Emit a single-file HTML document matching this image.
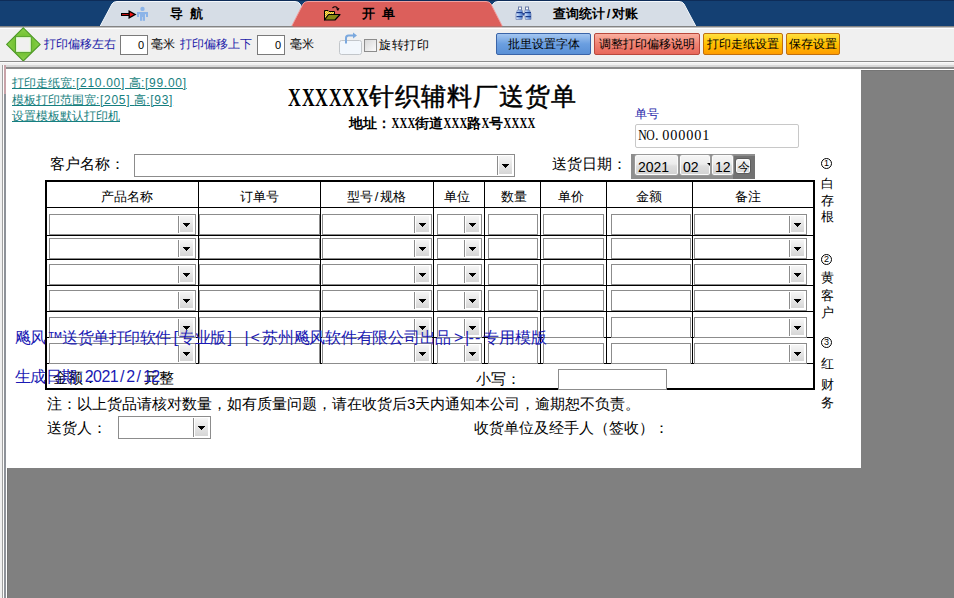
<!DOCTYPE html><html><head><meta charset="utf-8"><style>
*{margin:0;padding:0;box-sizing:border-box}
html,body{text-spacing-trim:space-all;width:954px;height:598px;overflow:hidden;background:#f0f0f0;font-family:"Liberation Sans",sans-serif;font-size:12px;color:#000}
.abs{position:absolute}
.t{position:absolute;white-space:nowrap;line-height:1}
.inp{position:absolute;background:#fff;border:1px solid #8c8c8c}
.cb{position:absolute;background:#fff;border:1px solid #8c8c8c}
.cb .sep{position:absolute;top:1px;bottom:1px;width:1px;background:#8c8c8c}
.cb .btn{position:absolute;background:linear-gradient(#f6f6f6,#d6d6d6)}
.cb .tri{position:absolute;width:0;height:0;border-left:4px solid transparent;border-right:4px solid transparent;border-top:4px solid #000}
.hl{position:absolute;height:1px;background:#000}
.vl{position:absolute;width:1px;background:#000}
.btn2{position:absolute;border-radius:2px;font-size:12px;line-height:20px;text-align:center;white-space:nowrap}
</style></head><body>
<div class="abs" style="left:0;top:0;width:954px;height:27px;background:#144073"></div>
<div class="abs" style="left:0;top:0;width:954px;height:1px;background:#0e2c58"></div>
<svg class="abs" style="left:0;top:0" width="954" height="28">
<path d="M100,26.5 L112,4 Q113.5,1.5 117,1.5 L295,1.5 Q298.5,1.5 300,4 L312,26.5 Z" fill="#d6dde6" stroke="#f4f8fc" stroke-width="1"/>
<path d="M481,26.5 L493,4 Q494.5,1.5 498,1.5 L679,1.5 Q682.5,1.5 684,4 L696,26.5 Z" fill="#d6dde6" stroke="#f4f8fc" stroke-width="1"/>
<path d="M291,27.5 L303,4 Q304.5,1.5 308,1.5 L486,1.5 Q489.5,1.5 491,4 L503,27.5 Z" fill="#dc5f5b" stroke="#f0a0a0" stroke-width="1"/>
</svg>
<div class="abs" style="left:0;top:26px;width:954px;height:1px;background:#848484"></div>
<div class="abs" style="left:0;top:27px;width:954px;height:1px;background:#c4c4c4"></div>
<div class="abs" style="left:293px;top:26px;width:209px;height:1px;background:#b46c68"></div>
<div class="abs" style="left:293px;top:27px;width:209px;height:1px;background:#dcc0c0"></div>
<div class="abs" style="left:0;top:28px;width:954px;height:1px;background:#fff"></div>
<svg class="abs" style="left:116px;top:3px" width="36" height="21">
<rect x="5" y="10" width="8.5" height="3" fill="#000"/>
<rect x="6" y="11" width="7.5" height="1" fill="#c41010"/>
<path d="M12.5,7 L20.5,11.5 L12.5,16 Z" fill="#000"/>
<path d="M13.8,9.3 L18,11.5 L13.8,13.7 Z" fill="#f01010"/>
<circle cx="26.5" cy="5.9" r="2.2" fill="#8cb4e8"/>
<rect x="21" y="9" width="11" height="2.2" fill="#8cb4e8"/>
<rect x="21" y="9" width="2" height="5" fill="#8cb4e8"/>
<rect x="30" y="9" width="2" height="5" fill="#8cb4e8"/>
<rect x="24" y="9" width="5" height="5" fill="#8cb4e8"/>
<rect x="24" y="13" width="2.2" height="4.8" fill="#8cb4e8"/>
<rect x="26.8" y="13" width="2.2" height="4.8" fill="#8cb4e8"/>
</svg>
<svg class="abs" style="left:318px;top:2px" width="28" height="22">
<defs><pattern id="chk" width="2" height="2" patternUnits="userSpaceOnUse"><rect width="2" height="2" fill="#f6e66a"/><rect width="1" height="1" fill="#d8a818"/><rect x="1" y="1" width="1" height="1" fill="#d8a818"/></pattern></defs>
<path d="M6.5,8.5 L10,8.5 L11,9.5 L16.5,9.5 L16.5,12.5 L6.5,18 Z" fill="url(#chk)" stroke="#000" stroke-width="1"/>
<path d="M6.5,18 L10.5,12.5 L22,12.5 L17,18 Z" fill="#868614" stroke="#000" stroke-width="1.2" stroke-linejoin="round"/>
<path d="M14.5,6 Q17,3.5 19.5,6" fill="none" stroke="#000" stroke-width="1.1"/>
<path d="M18,6.5 L21.5,6 L20,9 Z" fill="#000"/>
</svg>
<svg class="abs" style="left:510px;top:2px" width="28" height="22">
<defs><linearGradient id="bg1" x1="0" y1="0" x2="1" y2="0"><stop offset="0" stop-color="#e4f0ff"/><stop offset="0.6" stop-color="#7aa4e4"/><stop offset="1" stop-color="#4a74c0"/></linearGradient></defs>
<rect x="8.5" y="5" width="3" height="3" fill="#fff" stroke="#6a7ca8" stroke-width="1"/>
<rect x="15.5" y="5" width="3" height="3" fill="#fff" stroke="#6a7ca8" stroke-width="1"/>
<path d="M7.5,8 L12,8 L13,12 L12,17.5 L6,17.5 L6,12 Z" fill="url(#bg1)" stroke="#7a8cb8" stroke-width="0.8"/>
<path d="M15,8 L19.5,8 L21,12 L21,17.5 L15.5,17.5 L14.5,12 Z" fill="url(#bg1)" stroke="#7a8cb8" stroke-width="0.8"/>
<rect x="6.5" y="10" width="6" height="1.2" fill="#1a3a8a"/>
<rect x="15" y="10" width="6" height="1.2" fill="#1a3a8a"/>
<rect x="6.5" y="14" width="6" height="1.2" fill="#1a3a8a"/>
<rect x="15.5" y="14" width="5.5" height="1.2" fill="#1a3a8a"/>
<path d="M12,11 L15,11 L14,13.5 L13,13.5 Z" fill="#2a4a9a"/>
</svg>
<div class="t" style="left:170px;top:7px;font-size:13px;font-weight:bold">导</div>
<div class="t" style="left:190px;top:7px;font-size:13px;font-weight:bold">航</div>
<div class="t" style="left:362px;top:7px;font-size:13px;font-weight:bold">开</div>
<div class="t" style="left:382px;top:7px;font-size:13px;font-weight:bold">单</div>
<div class="t" style="left:553px;top:7px;font-size:13px;font-weight:bold">查询统计<span style="display:inline-block;width:7px;text-align:center">/</span>对账</div>
<svg class="abs" style="left:6px;top:27px" width="36" height="36">
<defs><radialGradient id="dg" cx="0.5" cy="0.5" r="0.6"><stop offset="0.3" stop-color="#6cbc2c"/><stop offset="1" stop-color="#92d852"/></radialGradient></defs>
<path d="M17.3,0.8 L34.1,17.4 L17.3,34 L0.7,17.4 Z" fill="url(#dg)" stroke="#4e9a26" stroke-width="1.1"/>
<rect x="9.7" y="9.8" width="15.4" height="15.4" fill="#f0f0f0" stroke="#4e9a26" stroke-width="1.1"/>
<rect x="10.7" y="10.8" width="13.4" height="13.4" fill="none" stroke="#e4fcd4" stroke-width="1"/>
</svg>
<div class="t" style="left:44px;top:38px;color:#1a1aa8">打印偏移左右</div>
<div class="inp" style="left:120px;top:35px;width:28px;height:20px;border-color:#7a7a7a"><span class="t" style="right:3px;top:4px;font-size:11px">0</span></div>
<div class="t" style="left:151px;top:38px">毫米</div>
<div class="t" style="left:180px;top:38px;color:#1a1aa8">打印偏移上下</div>
<div class="inp" style="left:257px;top:35px;width:28px;height:20px;border-color:#7a7a7a"><span class="t" style="right:3px;top:4px;font-size:11px">0</span></div>
<div class="t" style="left:290px;top:38px">毫米</div>
<svg class="abs" style="left:338px;top:31px" width="26" height="25">
<rect x="1.5" y="9.5" width="22" height="14" rx="2" fill="#f2f7fc" stroke="#c2c6ca" stroke-width="1"/>
<path d="M8,12.5 L8,7 Q8,4.5 10.5,4.5 L16,4.5" fill="none" stroke="#7aa8de" stroke-width="2"/>
<path d="M15,1.5 L19,4.5 L15,7.5 Z" fill="#7aa8de"/>
</svg>
<div class="abs" style="left:364px;top:39px;width:13px;height:13px;border:1px solid #8c8c8c;background:linear-gradient(135deg,#d8d8d8,#fafafa)"></div>
<div class="t" style="left:379px;top:39px;font-size:12px;letter-spacing:0.6px">旋转打印</div>
<div class="btn2" style="left:496px;top:33px;width:95px;height:22px;background:linear-gradient(#a4c6f0,#6a9ee0 50%,#5a90d6);border:1px solid #3a64a8">批里设置字体</div>
<div class="btn2" style="left:594px;top:33px;width:106px;height:22px;background:linear-gradient(#fab0a0,#f08272 50%,#e8675a);border:1px solid #b8483c">调整打印偏移说明</div>
<div class="btn2" style="left:703px;top:33px;width:80px;height:22px;background:linear-gradient(#ffe040,#ffc000 50%,#ff9c00);border:1px solid #c07010">打印走纸设置</div>
<div class="btn2" style="left:786px;top:33px;width:54px;height:22px;background:linear-gradient(#ffe040,#ffc000 50%,#ff9c00);border:1px solid #c07010">保存设置</div>
<div class="abs" style="left:0;top:61px;width:954px;height:1px;background:#8c8c8c"></div>
<div class="abs" style="left:0;top:62px;width:954px;height:1px;background:#fafafa"></div>
<div class="abs" style="left:4px;top:65px;width:950px;height:2px;background:#d8d8d8"></div>
<div class="abs" style="left:4px;top:67px;width:950px;height:2px;background:#8c8c8c"></div>
<div class="abs" style="left:2px;top:65px;width:1px;height:533px;background:#a0a0a0"></div>
<div class="abs" style="left:3px;top:65px;width:1px;height:533px;background:#fdfdfd"></div>
<div class="abs" style="left:4px;top:65px;width:2px;height:533px;background:#8e9299"></div>
<div class="abs" style="left:4px;top:65px;width:2px;height:29px;background:#c9a4aa"></div>
<div class="abs" style="left:6px;top:69px;width:1px;height:529px;background:#fff"></div>
<div class="abs" style="left:6px;top:69px;width:948px;height:1px;background:#fff"></div>
<div class="abs" style="left:7px;top:70px;width:947px;height:528px;background:#808080;border-top:1px solid #757575;border-left:1px solid #757575"></div>
<div class="abs" style="left:7px;top:69px;width:854px;height:399px;background:#fff"></div>
<div class="t" style="left:12px;top:77px;color:#177f80;text-decoration:underline">打印走纸宽<span style="letter-spacing:0.7px">:[210.00] </span>高<span style="letter-spacing:0.7px">:[99.00]</span></div>
<div class="t" style="left:12px;top:94px;color:#177f80;text-decoration:underline">模板打印范围宽<span style="letter-spacing:0.7px">:[205] </span>高<span style="letter-spacing:0.7px">:[93]</span></div>
<div class="t" style="left:12px;top:110px;color:#177f80;text-decoration:underline">设置模板默认打印机</div>
<div class="t" style="left:288px;top:85px;font-size:26px;font-weight:bold;font-family:'Liberation Serif',serif"><span style="display:inline-block;width:13.5px"><span style="display:inline-block;transform:scaleX(.68);transform-origin:0 0">X</span></span><span style="display:inline-block;width:13.5px"><span style="display:inline-block;transform:scaleX(.68);transform-origin:0 0">X</span></span><span style="display:inline-block;width:13.5px"><span style="display:inline-block;transform:scaleX(.68);transform-origin:0 0">X</span></span><span style="display:inline-block;width:13.5px"><span style="display:inline-block;transform:scaleX(.68);transform-origin:0 0">X</span></span><span style="display:inline-block;width:13.5px"><span style="display:inline-block;transform:scaleX(.68);transform-origin:0 0">X</span></span><span style="display:inline-block;width:13.5px"><span style="display:inline-block;transform:scaleX(.68);transform-origin:0 0">X</span></span></div>
<div class="t" style="left:369px;top:84px;font-size:25px;letter-spacing:1px;-webkit-text-stroke:0.5px #000">针织辅料厂送货单</div>
<div class="t" style="left:349px;top:116px;font-size:14px;font-weight:bold">地址：<span style="display:inline-block;width:8px;text-align:center;font-family:\'Liberation Serif\',serif;font-size:15px;position:relative;left:-1px"><span style="display:inline-block;transform:scaleX(0.72)">X</span></span><span style="display:inline-block;width:8px;text-align:center;font-family:\'Liberation Serif\',serif;font-size:15px;position:relative;left:-1px"><span style="display:inline-block;transform:scaleX(0.72)">X</span></span><span style="display:inline-block;width:8px;text-align:center;font-family:\'Liberation Serif\',serif;font-size:15px;position:relative;left:-1px"><span style="display:inline-block;transform:scaleX(0.72)">X</span></span>街道<span style="display:inline-block;width:8px;text-align:center;font-family:\'Liberation Serif\',serif;font-size:15px;position:relative;left:-1px"><span style="display:inline-block;transform:scaleX(0.72)">X</span></span><span style="display:inline-block;width:8px;text-align:center;font-family:\'Liberation Serif\',serif;font-size:15px;position:relative;left:-1px"><span style="display:inline-block;transform:scaleX(0.72)">X</span></span><span style="display:inline-block;width:8px;text-align:center;font-family:\'Liberation Serif\',serif;font-size:15px;position:relative;left:-1px"><span style="display:inline-block;transform:scaleX(0.72)">X</span></span>路<span style="display:inline-block;width:8px;text-align:center;font-family:\'Liberation Serif\',serif;font-size:15px;position:relative;left:-1px"><span style="display:inline-block;transform:scaleX(0.72)">X</span></span>号<span style="display:inline-block;width:8px;text-align:center;font-family:\'Liberation Serif\',serif;font-size:15px;position:relative;left:-1px"><span style="display:inline-block;transform:scaleX(0.72)">X</span></span><span style="display:inline-block;width:8px;text-align:center;font-family:\'Liberation Serif\',serif;font-size:15px;position:relative;left:-1px"><span style="display:inline-block;transform:scaleX(0.72)">X</span></span><span style="display:inline-block;width:8px;text-align:center;font-family:\'Liberation Serif\',serif;font-size:15px;position:relative;left:-1px"><span style="display:inline-block;transform:scaleX(0.72)">X</span></span><span style="display:inline-block;width:8px;text-align:center;font-family:\'Liberation Serif\',serif;font-size:15px;position:relative;left:-1px"><span style="display:inline-block;transform:scaleX(0.72)">X</span></span></div>
<div class="t" style="left:635px;top:108px;color:#1a1aa8">单号</div>
<div class="abs" style="left:635px;top:124px;width:164px;height:24px;border:1px solid #c8c8c8;border-radius:2px;background:#fff"></div>
<div class="t" style="left:637px;top:128px;font-size:15px;font-family:'Liberation Serif',serif"><span style="display:inline-block;width:8.1px;text-align:center;"><span style="display:inline-block;transform:scaleX(0.78)">N</span></span><span style="display:inline-block;width:8.1px;text-align:center;"><span style="display:inline-block;transform:scaleX(0.78)">O</span></span><span style="display:inline-block;width:8.1px;text-align:center;"><span style="display:inline-block;transform:scaleX(0.95)">.</span></span><span style="display:inline-block;width:8.1px;text-align:center;"><span style="display:inline-block;transform:scaleX(0.95)">0</span></span><span style="display:inline-block;width:8.1px;text-align:center;"><span style="display:inline-block;transform:scaleX(0.95)">0</span></span><span style="display:inline-block;width:8.1px;text-align:center;"><span style="display:inline-block;transform:scaleX(0.95)">0</span></span><span style="display:inline-block;width:8.1px;text-align:center;"><span style="display:inline-block;transform:scaleX(0.95)">0</span></span><span style="display:inline-block;width:8.1px;text-align:center;"><span style="display:inline-block;transform:scaleX(0.95)">0</span></span><span style="display:inline-block;width:8.1px;text-align:center;"><span style="display:inline-block;transform:scaleX(0.95)">1</span></span></div>
<div class="t" style="left:50px;top:156px;font-size:15px">客户名称：</div>
<div class="t" style="left:552px;top:156px;font-size:15px">送货日期：</div>
<div class="cb" style="left:134px;top:154px;width:381px;height:23px"><div class="sep" style="left:362px"></div><div class="btn" style="left:364px;top:1px;width:13px;height:18px"></div><svg width="7" height="4" style="position:absolute;left:367px;top:9px" shape-rendering="crispEdges"><rect x="0" y="0" width="7" height="1"/><rect x="1" y="1" width="5" height="1"/><rect x="2" y="2" width="3" height="1"/><rect x="3" y="3" width="1" height="1"/></svg></div>
<div class="abs" style="left:631px;top:154px;width:124px;height:25px;background:#8e8e8e"></div>
<div class="abs" style="left:733px;top:156px;width:22px;height:23px;background:#727272"></div>
<div class="abs" style="left:634px;top:154px;width:45px;height:22px;border-radius:3px;border:1px solid #9a9a9a;box-shadow:inset 0 0 0 1px #fbfbfb;background:linear-gradient(#f6f6f6,#ececec 45%,#dedede 55%,#d2d2d2)"><span class="t" style="left:3px;top:5px;font-size:14px">2021</span></div>
<div class="abs" style="left:679px;top:154px;width:32px;height:22px;border-radius:3px;border:1px solid #9a9a9a;box-shadow:inset 0 0 0 1px #fbfbfb;background:linear-gradient(#f6f6f6,#ececec 45%,#dedede 55%,#d2d2d2)"><span class="t" style="left:3px;top:5px;font-size:14px">02</span></div>
<div class="abs" style="left:707px;top:163px;width:0;height:0;border-top:3px solid #000;border-left:3px solid transparent"></div>
<div class="abs" style="left:711px;top:154px;width:23px;height:22px;border-radius:3px;border:1px solid #9a9a9a;box-shadow:inset 0 0 0 1px #fbfbfb;background:linear-gradient(#f6f6f6,#ececec 45%,#dedede 55%,#d2d2d2)"><span class="t" style="left:3px;top:5px;font-size:14px">12</span></div>
<div class="abs" style="left:735px;top:158px;width:16px;height:16px;border-radius:3px;border:1px solid #5e5e5e;box-shadow:inset 0 0 0 1px #fafafa;background:linear-gradient(#f6f6f6,#e8e8e8 50%,#d6d6d6)"><span class="t" style="left:1.5px;top:1.5px;font-size:12px">今</span></div>
<div class="abs" style="left:45px;top:180px;width:770px;height:2px;background:#000"></div>
<div class="abs" style="left:45px;top:388px;width:770px;height:2px;background:#000"></div>
<div class="abs" style="left:45px;top:180px;width:2px;height:210px;background:#000"></div>
<div class="abs" style="left:813px;top:180px;width:2px;height:210px;background:#000"></div>
<div class="hl" style="left:45px;top:207px;width:770px"></div>
<div class="hl" style="left:45px;top:235px;width:770px"></div>
<div class="hl" style="left:45px;top:259px;width:770px"></div>
<div class="hl" style="left:45px;top:285px;width:770px"></div>
<div class="hl" style="left:45px;top:311px;width:770px"></div>
<div class="hl" style="left:45px;top:337px;width:770px"></div>
<div class="hl" style="left:45px;top:363px;width:770px"></div>
<div class="vl" style="left:198px;top:180px;height:184px"></div>
<div class="vl" style="left:320px;top:180px;height:184px"></div>
<div class="vl" style="left:433px;top:180px;height:184px"></div>
<div class="vl" style="left:484px;top:180px;height:184px"></div>
<div class="vl" style="left:540px;top:180px;height:184px"></div>
<div class="vl" style="left:606px;top:180px;height:184px"></div>
<div class="vl" style="left:692px;top:180px;height:184px"></div>
<div class="t" style="left:50px;width:153px;top:190px;text-align:center;font-size:13px">产品名称</div>
<div class="t" style="left:198px;width:122px;top:190px;text-align:center;font-size:13px">订单号</div>
<div class="t" style="left:320px;width:113px;top:190px;text-align:center;font-size:13px">型号<span style="display:inline-block;width:6.5px;text-align:center;">/</span>规格</div>
<div class="t" style="left:431px;width:51px;top:190px;text-align:center;font-size:13px">单位</div>
<div class="t" style="left:485.5px;width:56px;top:190px;text-align:center;font-size:13px">数量</div>
<div class="t" style="left:538px;width:66px;top:190px;text-align:center;font-size:13px">单价</div>
<div class="t" style="left:606px;width:86px;top:190px;text-align:center;font-size:13px">金额</div>
<div class="t" style="left:687.5px;width:121px;top:190px;text-align:center;font-size:13px">备注</div>
<div class="cb" style="left:49px;top:214px;width:147px;height:21px"><div class="sep" style="left:128px"></div><div class="btn" style="left:130px;top:1px;width:13px;height:16px"></div><svg width="7" height="4" style="position:absolute;left:133px;top:8px" shape-rendering="crispEdges"><rect x="0" y="0" width="7" height="1"/><rect x="1" y="1" width="5" height="1"/><rect x="2" y="2" width="3" height="1"/><rect x="3" y="3" width="1" height="1"/></svg></div>
<div class="inp" style="left:199px;top:214px;width:121px;height:21px"></div>
<div class="cb" style="left:322px;top:214px;width:110px;height:21px"><div class="sep" style="left:91px"></div><div class="btn" style="left:93px;top:1px;width:13px;height:16px"></div><svg width="7" height="4" style="position:absolute;left:96px;top:8px" shape-rendering="crispEdges"><rect x="0" y="0" width="7" height="1"/><rect x="1" y="1" width="5" height="1"/><rect x="2" y="2" width="3" height="1"/><rect x="3" y="3" width="1" height="1"/></svg></div>
<div class="cb" style="left:437px;top:214px;width:45px;height:21px"><div class="sep" style="left:26px"></div><div class="btn" style="left:28px;top:1px;width:13px;height:16px"></div><svg width="7" height="4" style="position:absolute;left:31px;top:8px" shape-rendering="crispEdges"><rect x="0" y="0" width="7" height="1"/><rect x="1" y="1" width="5" height="1"/><rect x="2" y="2" width="3" height="1"/><rect x="3" y="3" width="1" height="1"/></svg></div>
<div class="inp" style="left:488px;top:214px;width:50px;height:21px"></div>
<div class="inp" style="left:543px;top:214px;width:61px;height:21px"></div>
<div class="inp" style="left:611px;top:214px;width:80px;height:21px"></div>
<div class="cb" style="left:694px;top:214px;width:113px;height:21px"><div class="sep" style="left:94px"></div><div class="btn" style="left:96px;top:1px;width:13px;height:16px"></div><svg width="7" height="4" style="position:absolute;left:99px;top:8px" shape-rendering="crispEdges"><rect x="0" y="0" width="7" height="1"/><rect x="1" y="1" width="5" height="1"/><rect x="2" y="2" width="3" height="1"/><rect x="3" y="3" width="1" height="1"/></svg></div>
<div class="cb" style="left:49px;top:238px;width:147px;height:21px"><div class="sep" style="left:128px"></div><div class="btn" style="left:130px;top:1px;width:13px;height:16px"></div><svg width="7" height="4" style="position:absolute;left:133px;top:8px" shape-rendering="crispEdges"><rect x="0" y="0" width="7" height="1"/><rect x="1" y="1" width="5" height="1"/><rect x="2" y="2" width="3" height="1"/><rect x="3" y="3" width="1" height="1"/></svg></div>
<div class="inp" style="left:199px;top:238px;width:121px;height:21px"></div>
<div class="cb" style="left:322px;top:238px;width:110px;height:21px"><div class="sep" style="left:91px"></div><div class="btn" style="left:93px;top:1px;width:13px;height:16px"></div><svg width="7" height="4" style="position:absolute;left:96px;top:8px" shape-rendering="crispEdges"><rect x="0" y="0" width="7" height="1"/><rect x="1" y="1" width="5" height="1"/><rect x="2" y="2" width="3" height="1"/><rect x="3" y="3" width="1" height="1"/></svg></div>
<div class="cb" style="left:437px;top:238px;width:45px;height:21px"><div class="sep" style="left:26px"></div><div class="btn" style="left:28px;top:1px;width:13px;height:16px"></div><svg width="7" height="4" style="position:absolute;left:31px;top:8px" shape-rendering="crispEdges"><rect x="0" y="0" width="7" height="1"/><rect x="1" y="1" width="5" height="1"/><rect x="2" y="2" width="3" height="1"/><rect x="3" y="3" width="1" height="1"/></svg></div>
<div class="inp" style="left:488px;top:238px;width:50px;height:21px"></div>
<div class="inp" style="left:543px;top:238px;width:61px;height:21px"></div>
<div class="inp" style="left:611px;top:238px;width:80px;height:21px"></div>
<div class="cb" style="left:694px;top:238px;width:113px;height:21px"><div class="sep" style="left:94px"></div><div class="btn" style="left:96px;top:1px;width:13px;height:16px"></div><svg width="7" height="4" style="position:absolute;left:99px;top:8px" shape-rendering="crispEdges"><rect x="0" y="0" width="7" height="1"/><rect x="1" y="1" width="5" height="1"/><rect x="2" y="2" width="3" height="1"/><rect x="3" y="3" width="1" height="1"/></svg></div>
<div class="cb" style="left:49px;top:264px;width:147px;height:21px"><div class="sep" style="left:128px"></div><div class="btn" style="left:130px;top:1px;width:13px;height:16px"></div><svg width="7" height="4" style="position:absolute;left:133px;top:8px" shape-rendering="crispEdges"><rect x="0" y="0" width="7" height="1"/><rect x="1" y="1" width="5" height="1"/><rect x="2" y="2" width="3" height="1"/><rect x="3" y="3" width="1" height="1"/></svg></div>
<div class="inp" style="left:199px;top:264px;width:121px;height:21px"></div>
<div class="cb" style="left:322px;top:264px;width:110px;height:21px"><div class="sep" style="left:91px"></div><div class="btn" style="left:93px;top:1px;width:13px;height:16px"></div><svg width="7" height="4" style="position:absolute;left:96px;top:8px" shape-rendering="crispEdges"><rect x="0" y="0" width="7" height="1"/><rect x="1" y="1" width="5" height="1"/><rect x="2" y="2" width="3" height="1"/><rect x="3" y="3" width="1" height="1"/></svg></div>
<div class="cb" style="left:437px;top:264px;width:45px;height:21px"><div class="sep" style="left:26px"></div><div class="btn" style="left:28px;top:1px;width:13px;height:16px"></div><svg width="7" height="4" style="position:absolute;left:31px;top:8px" shape-rendering="crispEdges"><rect x="0" y="0" width="7" height="1"/><rect x="1" y="1" width="5" height="1"/><rect x="2" y="2" width="3" height="1"/><rect x="3" y="3" width="1" height="1"/></svg></div>
<div class="inp" style="left:488px;top:264px;width:50px;height:21px"></div>
<div class="inp" style="left:543px;top:264px;width:61px;height:21px"></div>
<div class="inp" style="left:611px;top:264px;width:80px;height:21px"></div>
<div class="cb" style="left:694px;top:264px;width:113px;height:21px"><div class="sep" style="left:94px"></div><div class="btn" style="left:96px;top:1px;width:13px;height:16px"></div><svg width="7" height="4" style="position:absolute;left:99px;top:8px" shape-rendering="crispEdges"><rect x="0" y="0" width="7" height="1"/><rect x="1" y="1" width="5" height="1"/><rect x="2" y="2" width="3" height="1"/><rect x="3" y="3" width="1" height="1"/></svg></div>
<div class="cb" style="left:49px;top:290px;width:147px;height:21px"><div class="sep" style="left:128px"></div><div class="btn" style="left:130px;top:1px;width:13px;height:16px"></div><svg width="7" height="4" style="position:absolute;left:133px;top:8px" shape-rendering="crispEdges"><rect x="0" y="0" width="7" height="1"/><rect x="1" y="1" width="5" height="1"/><rect x="2" y="2" width="3" height="1"/><rect x="3" y="3" width="1" height="1"/></svg></div>
<div class="inp" style="left:199px;top:290px;width:121px;height:21px"></div>
<div class="cb" style="left:322px;top:290px;width:110px;height:21px"><div class="sep" style="left:91px"></div><div class="btn" style="left:93px;top:1px;width:13px;height:16px"></div><svg width="7" height="4" style="position:absolute;left:96px;top:8px" shape-rendering="crispEdges"><rect x="0" y="0" width="7" height="1"/><rect x="1" y="1" width="5" height="1"/><rect x="2" y="2" width="3" height="1"/><rect x="3" y="3" width="1" height="1"/></svg></div>
<div class="cb" style="left:437px;top:290px;width:45px;height:21px"><div class="sep" style="left:26px"></div><div class="btn" style="left:28px;top:1px;width:13px;height:16px"></div><svg width="7" height="4" style="position:absolute;left:31px;top:8px" shape-rendering="crispEdges"><rect x="0" y="0" width="7" height="1"/><rect x="1" y="1" width="5" height="1"/><rect x="2" y="2" width="3" height="1"/><rect x="3" y="3" width="1" height="1"/></svg></div>
<div class="inp" style="left:488px;top:290px;width:50px;height:21px"></div>
<div class="inp" style="left:543px;top:290px;width:61px;height:21px"></div>
<div class="inp" style="left:611px;top:290px;width:80px;height:21px"></div>
<div class="cb" style="left:694px;top:290px;width:113px;height:21px"><div class="sep" style="left:94px"></div><div class="btn" style="left:96px;top:1px;width:13px;height:16px"></div><svg width="7" height="4" style="position:absolute;left:99px;top:8px" shape-rendering="crispEdges"><rect x="0" y="0" width="7" height="1"/><rect x="1" y="1" width="5" height="1"/><rect x="2" y="2" width="3" height="1"/><rect x="3" y="3" width="1" height="1"/></svg></div>
<div class="cb" style="left:49px;top:317px;width:147px;height:21px"><div class="sep" style="left:128px"></div><div class="btn" style="left:130px;top:1px;width:13px;height:16px"></div><svg width="7" height="4" style="position:absolute;left:133px;top:8px" shape-rendering="crispEdges"><rect x="0" y="0" width="7" height="1"/><rect x="1" y="1" width="5" height="1"/><rect x="2" y="2" width="3" height="1"/><rect x="3" y="3" width="1" height="1"/></svg></div>
<div class="inp" style="left:199px;top:317px;width:121px;height:21px"></div>
<div class="cb" style="left:322px;top:317px;width:110px;height:21px"><div class="sep" style="left:91px"></div><div class="btn" style="left:93px;top:1px;width:13px;height:16px"></div><svg width="7" height="4" style="position:absolute;left:96px;top:8px" shape-rendering="crispEdges"><rect x="0" y="0" width="7" height="1"/><rect x="1" y="1" width="5" height="1"/><rect x="2" y="2" width="3" height="1"/><rect x="3" y="3" width="1" height="1"/></svg></div>
<div class="cb" style="left:437px;top:317px;width:45px;height:21px"><div class="sep" style="left:26px"></div><div class="btn" style="left:28px;top:1px;width:13px;height:16px"></div><svg width="7" height="4" style="position:absolute;left:31px;top:8px" shape-rendering="crispEdges"><rect x="0" y="0" width="7" height="1"/><rect x="1" y="1" width="5" height="1"/><rect x="2" y="2" width="3" height="1"/><rect x="3" y="3" width="1" height="1"/></svg></div>
<div class="inp" style="left:488px;top:317px;width:50px;height:21px"></div>
<div class="inp" style="left:543px;top:317px;width:61px;height:21px"></div>
<div class="inp" style="left:611px;top:317px;width:80px;height:21px"></div>
<div class="cb" style="left:694px;top:317px;width:113px;height:21px"><div class="sep" style="left:94px"></div><div class="btn" style="left:96px;top:1px;width:13px;height:16px"></div><svg width="7" height="4" style="position:absolute;left:99px;top:8px" shape-rendering="crispEdges"><rect x="0" y="0" width="7" height="1"/><rect x="1" y="1" width="5" height="1"/><rect x="2" y="2" width="3" height="1"/><rect x="3" y="3" width="1" height="1"/></svg></div>
<div class="cb" style="left:49px;top:343px;width:147px;height:21px"><div class="sep" style="left:128px"></div><div class="btn" style="left:130px;top:1px;width:13px;height:16px"></div><svg width="7" height="4" style="position:absolute;left:133px;top:8px" shape-rendering="crispEdges"><rect x="0" y="0" width="7" height="1"/><rect x="1" y="1" width="5" height="1"/><rect x="2" y="2" width="3" height="1"/><rect x="3" y="3" width="1" height="1"/></svg></div>
<div class="inp" style="left:199px;top:343px;width:121px;height:21px"></div>
<div class="cb" style="left:322px;top:343px;width:110px;height:21px"><div class="sep" style="left:91px"></div><div class="btn" style="left:93px;top:1px;width:13px;height:16px"></div><svg width="7" height="4" style="position:absolute;left:96px;top:8px" shape-rendering="crispEdges"><rect x="0" y="0" width="7" height="1"/><rect x="1" y="1" width="5" height="1"/><rect x="2" y="2" width="3" height="1"/><rect x="3" y="3" width="1" height="1"/></svg></div>
<div class="cb" style="left:437px;top:343px;width:45px;height:21px"><div class="sep" style="left:26px"></div><div class="btn" style="left:28px;top:1px;width:13px;height:16px"></div><svg width="7" height="4" style="position:absolute;left:31px;top:8px" shape-rendering="crispEdges"><rect x="0" y="0" width="7" height="1"/><rect x="1" y="1" width="5" height="1"/><rect x="2" y="2" width="3" height="1"/><rect x="3" y="3" width="1" height="1"/></svg></div>
<div class="inp" style="left:488px;top:343px;width:50px;height:21px"></div>
<div class="inp" style="left:543px;top:343px;width:61px;height:21px"></div>
<div class="inp" style="left:611px;top:343px;width:80px;height:21px"></div>
<div class="cb" style="left:694px;top:343px;width:113px;height:21px"><div class="sep" style="left:94px"></div><div class="btn" style="left:96px;top:1px;width:13px;height:16px"></div><svg width="7" height="4" style="position:absolute;left:99px;top:8px" shape-rendering="crispEdges"><rect x="0" y="0" width="7" height="1"/><rect x="1" y="1" width="5" height="1"/><rect x="2" y="2" width="3" height="1"/><rect x="3" y="3" width="1" height="1"/></svg></div>
<div class="t" style="left:53px;top:370px;font-size:15px">金额：</div>
<div class="t" style="left:144px;top:370px;font-size:15px">元整</div>
<div class="t" style="left:476px;top:371px;font-size:15px">小写：</div>
<div class="inp" style="left:558px;top:369px;width:109px;height:21px;border-color:#8c8c8c"></div>
<div class="abs" style="left:821px;top:158px;width:11px;height:11px;border:1px solid #000;border-radius:50%;font-size:9px;line-height:9px;text-align:center">1</div>
<div class="t" style="left:821px;top:177px;font-size:13px">白</div>
<div class="t" style="left:821px;top:194px;font-size:13px">存</div>
<div class="t" style="left:821px;top:210px;font-size:13px">根</div>
<div class="abs" style="left:821px;top:254px;width:11px;height:11px;border:1px solid #000;border-radius:50%;font-size:9px;line-height:9px;text-align:center">2</div>
<div class="t" style="left:821px;top:271px;font-size:13px">黄</div>
<div class="t" style="left:821px;top:289px;font-size:13px">客</div>
<div class="t" style="left:821px;top:306px;font-size:13px">户</div>
<div class="abs" style="left:821px;top:337px;width:11px;height:11px;border:1px solid #000;border-radius:50%;font-size:9px;line-height:9px;text-align:center">3</div>
<div class="t" style="left:821px;top:357px;font-size:13px">红</div>
<div class="t" style="left:821px;top:378px;font-size:13px">财</div>
<div class="t" style="left:821px;top:396px;font-size:13px">务</div>
<div class="t" style="left:47px;top:396px;font-size:15px">注：以上货品请核对数量，如有质量问题，请在收货后<span style="display:inline-block;width:7.5px;text-align:center;">3</span>天内通知本公司，逾期恕不负责。</div>
<div class="t" style="left:47px;top:420px;font-size:15px">送货人：</div>
<div class="cb" style="left:118px;top:416px;width:93px;height:23px"><div class="sep" style="left:74px"></div><div class="btn" style="left:76px;top:1px;width:13px;height:18px"></div><svg width="7" height="4" style="position:absolute;left:79px;top:9px" shape-rendering="crispEdges"><rect x="0" y="0" width="7" height="1"/><rect x="1" y="1" width="5" height="1"/><rect x="2" y="2" width="3" height="1"/><rect x="3" y="3" width="1" height="1"/></svg></div>
<div class="t" style="left:474px;top:420px;font-size:15px">收货单位及经手人（签收）：</div>
<div class="t" style="left:14.5px;top:330px;font-size:16px;color:#1a1ab4;letter-spacing:-0.5px">飚风</div>
<div class="t" style="left:47px;top:330px;font-size:16px;color:#1a1ab4;letter-spacing:0px">™</div>
<div class="t" style="left:62px;top:330px;font-size:16px;color:#1a1ab4;letter-spacing:-0.5px">送货单打印软件</div>
<div class="t" style="left:173.5px;top:330px;font-size:16px;color:#1a1ab4;letter-spacing:0px">[</div>
<div class="t" style="left:179px;top:330px;font-size:16px;color:#1a1ab4;letter-spacing:-0.5px">专业版</div>
<div class="t" style="left:227.5px;top:330px;font-size:16px;color:#1a1ab4;letter-spacing:0px">]</div>
<div class="t" style="left:244.5px;top:330px;font-size:16px;color:#1a1ab4;letter-spacing:0px">|</div>
<div class="t" style="left:250.5px;top:330px;font-size:16px;color:#1a1ab4;letter-spacing:0px">&lt;</div>
<div class="t" style="left:262px;top:330px;font-size:16px;color:#1a1ab4;letter-spacing:-0.25px">苏州飚风软件有限公司出品</div>
<div class="t" style="left:454px;top:330px;font-size:16px;color:#1a1ab4;letter-spacing:0px">&gt;</div>
<div class="t" style="left:465px;top:330px;font-size:16px;color:#1a1ab4;letter-spacing:0px">|</div>
<div class="t" style="left:468.5px;top:330px;font-size:16px;color:#1a1ab4;letter-spacing:1.2px">--</div>
<div class="t" style="left:482.5px;top:330px;font-size:16px;color:#1a1ab4;letter-spacing:0.3px">专用模版</div>
<div class="t" style="left:14.5px;top:369px;font-size:16px;color:#1a1ab4;letter-spacing:-0.5px">生成日期</div>
<div class="t" style="left:76.5px;top:369px;font-size:16px;color:#1a1ab4"><span style="display:inline-block;width:8.3px;text-align:center;">:</span><span style="display:inline-block;width:8.3px;text-align:center;">2</span><span style="display:inline-block;width:8.3px;text-align:center;">0</span><span style="display:inline-block;width:8.3px;text-align:center;">2</span><span style="display:inline-block;width:8.3px;text-align:center;">1</span><span style="display:inline-block;width:8.3px;text-align:center;">/</span><span style="display:inline-block;width:8.3px;text-align:center;">2</span><span style="display:inline-block;width:8.3px;text-align:center;">/</span><span style="display:inline-block;width:8.3px;text-align:center;">1</span><span style="display:inline-block;width:8.3px;text-align:center;">2</span></div>
</body></html>
